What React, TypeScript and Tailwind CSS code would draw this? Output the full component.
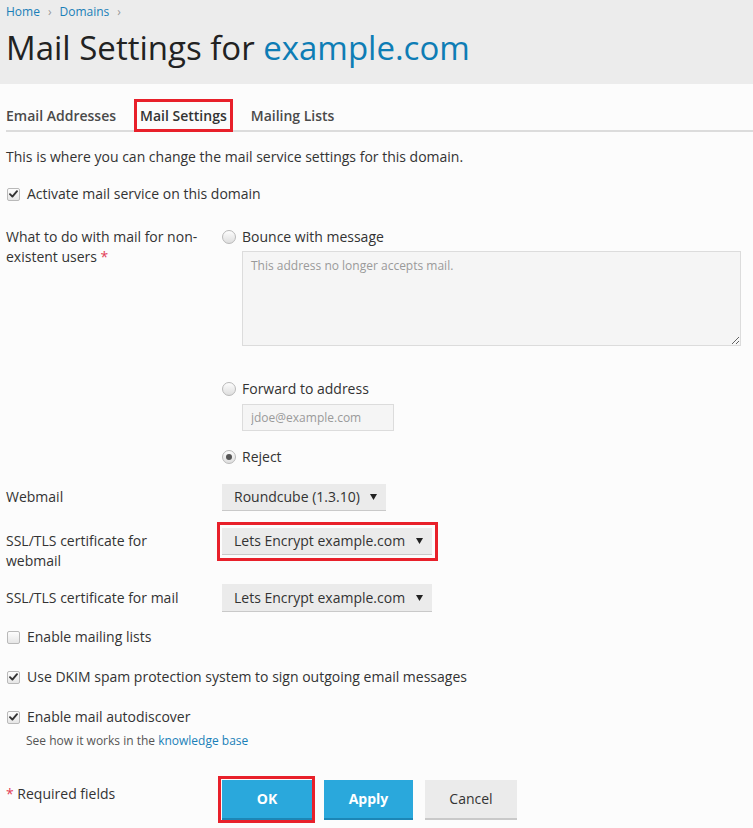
import React from 'react';

function Checkbox({ checked }: { checked?: boolean }) {
  return (
    <span className="flex h-[13px] w-[13px] shrink-0 items-center justify-center rounded-[2px] border border-[#b9b9b9] bg-gradient-to-b from-[#fdfdfd] to-[#e6e6e6]">
      {checked && (
        <svg width="9" height="8" viewBox="0 0 9 8">
          <path d="M1 4.2 L3.4 6.6 L8 1.2" fill="none" stroke="#333" strokeWidth="1.9" strokeLinecap="round" strokeLinejoin="round" />
        </svg>
      )}
    </span>
  );
}

function Radio({ checked }: { checked?: boolean }) {
  return (
    <span className="flex h-[14px] w-[14px] shrink-0 items-center justify-center rounded-full border border-[#b9b9b9] bg-gradient-to-b from-[#fdfdfd] to-[#dedede]">
      {checked && <span className="h-[6px] w-[6px] rounded-full bg-[#555]" />}
    </span>
  );
}

function Select({ value, width }: { value: string; width: string }) {
  return (
    <div className={`flex h-[27px] items-center justify-between border-b border-[#c9c9c9] bg-[#ebebeb] pl-[12px] pr-[9px] text-[14px] text-[#333] ${width}`}>
      <span>{value}</span>
      <svg width="7" height="6" viewBox="0 0 7 6">
        <path d="M0 0 H7 L3.5 6 Z" fill="#222" />
      </svg>
    </div>
  );
}

function Highlight({ className }: { className: string }) {
  return <span className={`pointer-events-none absolute border-[3px] border-[#e8202a] ${className}`} />;
}

export default function App() {
  return (
    <div className="min-h-[828px] bg-[#fcfcfc] text-[14px] leading-[20px] text-[#333]" style={{ fontFamily: '"Open Sans", "Liberation Sans", sans-serif' }}>
      <header className="h-[84px] bg-[#ececec] px-[6px] pt-[4px]">
        <nav className="flex items-center text-[12px] leading-[16px] text-[#1a7fb8]">
          <span>Home</span>
          <span className="mx-[8px] text-[#999]">›</span>
          <span>Domains</span>
          <span className="mx-[8px] text-[#999]">›</span>
        </nav>
        <h1 className="mt-[8px] text-[33px] leading-[40px] font-normal text-[#222]">
          Mail Settings for <span className="text-[#0e7db5]">example.com</span>
        </h1>
      </header>

      <div className="pl-[6px] pr-[12px]">
        <div className="-mr-[12px] flex gap-[24px] border-b-2 border-[#dcdcdc] pt-[22px] text-[14px] font-semibold text-[#4a4a4a]">
          <span className="pb-[4px]">Email Addresses</span>
          <span className="relative -mb-[2px] border-b-[3px] border-[#222] pb-[3px] text-[#333]">
            Mail Settings
            <Highlight className="-top-[7px] -left-[6px] -right-[6px] -bottom-[3px]" />
          </span>
          <span className="pb-[4px]">Mailing Lists</span>
        </div>

        <p className="mt-[15px]">This is where you can change the mail service settings for this domain.</p>

        <label className="mt-[17px] flex items-center gap-[7px] pl-[1px]">
          <Checkbox checked />
          <span>Activate mail service on this domain</span>
        </label>

        <div className="mt-[23px] flex">
          <div className="w-[216px] shrink-0 pr-[12px]">
            What to do with mail for non-existent users <span className="text-[#e23e57]">*</span>
          </div>
          <div className="flex-1">
            <label className="flex items-center gap-[6px]">
              <Radio />
              <span>Bounce with message</span>
            </label>
            <textarea
              readOnly
              placeholder="This address no longer accepts mail."
              className="mt-[4px] ml-[20px] block h-[95px] w-[499px] border border-[#dcdcdc] bg-[#f5f5f5] px-[8px] py-[5px] text-[12px] leading-[18px] placeholder-[#9a9a9a] outline-none"
            />
            <label className="mt-[33px] flex items-center gap-[6px]">
              <Radio />
              <span>Forward to address</span>
            </label>
            <input
              readOnly
              placeholder="jdoe@example.com"
              className="mt-[5px] ml-[20px] block h-[27px] w-[152px] border border-[#dcdcdc] bg-[#f5f5f5] px-[8px] text-[12px] placeholder-[#9a9a9a] outline-none"
            />
            <label className="mt-[16px] flex items-center gap-[6px]">
              <Radio checked />
              <span>Reject</span>
            </label>
          </div>
        </div>

        <div className="mt-[17px] flex items-start">
          <div className="w-[216px] shrink-0 pt-[3px]">Webmail</div>
          <Select value="Roundcube (1.3.10)" width="w-[164px]" />
        </div>

        <div className="mt-[17px] flex items-start">
          <div className="w-[216px] shrink-0 pt-[3px] pr-[40px]">SSL/TLS certificate for webmail</div>
          <div className="relative">
            <Select value="Lets Encrypt example.com" width="w-[210px]" />
            <Highlight className="-top-[6px] -left-[5px] -right-[6px] -bottom-[6px]" />
          </div>
        </div>

        <div className="mt-[13px] flex items-start">
          <div className="w-[216px] shrink-0 pt-[4px]">SSL/TLS certificate for mail</div>
          <Select value="Lets Encrypt example.com" width="w-[210px] h-[28px]" />
        </div>

        <label className="mt-[15px] flex items-center gap-[7px] pl-[1px]">
          <Checkbox />
          <span>Enable mailing lists</span>
        </label>

        <label className="mt-[20px] flex items-center gap-[7px] pl-[1px]">
          <Checkbox checked />
          <span>Use DKIM spam protection system to sign outgoing email messages</span>
        </label>

        <label className="mt-[20px] flex items-center gap-[7px] pl-[1px]">
          <Checkbox checked />
          <span>Enable mail autodiscover</span>
        </label>
        <p className="mt-[6px] pl-[20px] text-[12px] leading-[16px] text-[#555]">
          See how it works in the <span className="text-[#1a7fb8]">knowledge base</span>
        </p>

        <div className="mt-[31px] flex items-start">
          <div className="w-[216px] shrink-0 pt-[4px]">
            <span className="text-[#e23e57]">*</span> Required fields
          </div>
          <div className="flex gap-[12px]">
            <div className="relative">
              <button className="h-[40px] w-[90px] border-b-2 border-[#1c86b6] bg-[#2aa8dc] text-[14px] font-bold text-white">OK</button>
              <Highlight className="-top-[4px] -left-[4px] -right-[3px] -bottom-[3px]" />
            </div>
            <button className="h-[40px] w-[89px] border-b-2 border-[#1c86b6] bg-[#2aa8dc] text-[14px] font-bold text-white">Apply</button>
            <button className="h-[40px] w-[92px] border-b-2 border-[#c9c9c9] bg-[#ebebeb] text-[14px] text-[#333]">Cancel</button>
          </div>
        </div>
      </div>
    </div>
  );
}
